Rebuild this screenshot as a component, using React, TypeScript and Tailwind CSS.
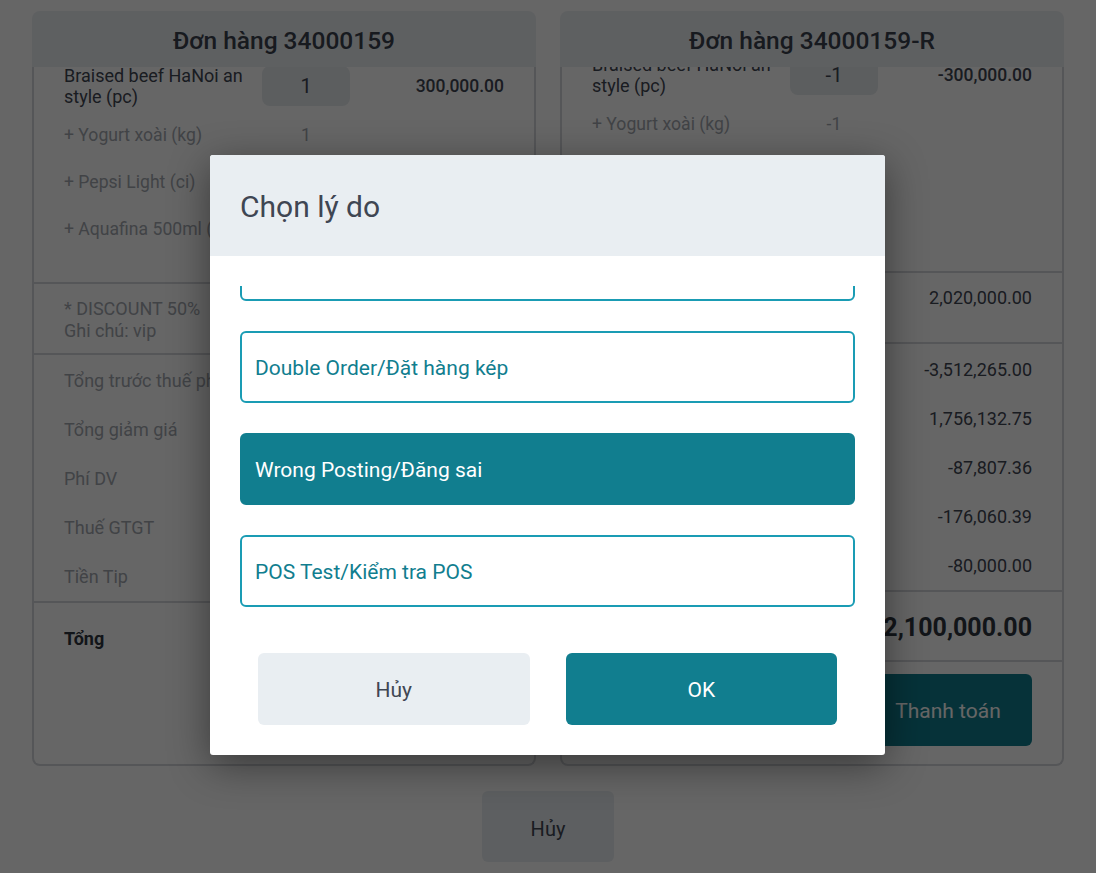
import React from "react";

const MAIN = "text-[#3f4653]";
const SUB = "text-[#a3a8b0]";

type Sub = { label: string; qty: string };
type Sum = { label: string; value: string };

function OrderCard(props: {
  title: string;
  listH: string;
  listOffset: string;
  mainQty: string;
  mainValue: string;
  subs: Sub[];
  discountValue: string;
  sums: Sum[];
  total: string;
  withPay: boolean;
}) {
  return (
    <div className="w-[504px] h-[755px] flex flex-col">
      <div className="h-[56px] shrink-0 pt-[4px] rounded-t-[8px] bg-[#eceff3] flex items-center justify-center text-[24.5px] font-medium text-[#3b424e]">
        {props.title}
      </div>
      <div className="flex-1 flex flex-col border-2 border-t-0 border-[#d4d7db] rounded-b-[8px]">
        <div className={`${props.listH} overflow-hidden shrink-0`}>
          <div className={`${props.listOffset} px-[30px]`}>
            <div className="h-[50px] flex items-center">
              <div className={`w-[198px] text-[18px] leading-[21px] ${MAIN}`}>
                Braised beef HaNoi an style (pc)
              </div>
              <div className={`w-[88px] h-[40px] rounded-[8px] bg-[#e6eaee] flex items-center justify-center text-[20px] ${MAIN}`}>
                {props.mainQty}
              </div>
              <div className={`flex-1 text-right text-[17.5px] font-medium ${MAIN}`}>
                {props.mainValue}
              </div>
            </div>
            {props.subs.map((s) => (
              <div key={s.label} className="h-[47px] pt-[2px] flex items-center">
                <div className={`w-[198px] whitespace-nowrap text-[17.6px] ${SUB}`}>{s.label}</div>
                <div className={`w-[88px] text-center text-[17.6px] ${SUB}`}>{s.qty}</div>
                <div className="flex-1" />
              </div>
            ))}
          </div>
        </div>
        <div className="h-[2px] bg-[#d4d7db] shrink-0" />
        <div className="h-[69px] shrink-0 pt-[14px] px-[30px] flex justify-between leading-[22px] text-[18px]">
          <div className={SUB}>
            <div>* DISCOUNT 50%</div>
            <div>Ghi chú: vip</div>
          </div>
          <div className={MAIN}>{props.discountValue}</div>
        </div>
        <div className="h-[2px] bg-[#d4d7db] shrink-0" />
        <div className="h-[246px] shrink-0 pt-[1px] px-[30px] flex flex-col">
          {props.sums.map((s) => (
            <div key={s.label} className="h-[49px] shrink-0 flex items-center justify-between text-[18px]">
              <span className={SUB}>{s.label}</span>
              <span className={MAIN}>{s.value}</span>
            </div>
          ))}
        </div>
        <div className="h-[2px] bg-[#d4d7db] shrink-0" />
        <div className="h-[68px] shrink-0 pt-[3px] px-[30px] flex items-center justify-between">
          <span className="text-[18px] font-bold text-[#2f3540]">Tổng</span>
          <span className="text-[25px] font-bold text-[#2f3540]">{props.total}</span>
        </div>
        {props.withPay && (
          <>
            <div className="h-[2px] bg-[#d4d7db] shrink-0" />
            <div className="pt-[12px] px-[30px] flex justify-end">
              <button className="w-[168px] h-[72px] pt-[4px] rounded-[6px] bg-[#117e8f] text-white text-[21px]">
                Thanh toán
              </button>
            </div>
          </>
        )}
      </div>
    </div>
  );
}

const reasons = [
  { label: "Customer Cancel/Khách hủy", selected: false },
  { label: "Double Order/Đặt hàng kép", selected: false },
  { label: "Wrong Posting/Đăng sai", selected: true },
  { label: "POS Test/Kiểm tra POS", selected: false },
  { label: "Other/Khác", selected: false },
];

export default function App() {
  return (
    <div className="relative w-[1096px] h-[873px] overflow-hidden bg-white font-['Roboto',sans-serif]">
      <div className="flex gap-[24px] px-[32px] pt-[11px]">
        <OrderCard
          title="Đơn hàng 34000159"
          listH="h-[215px]"
          listOffset="-mt-[6px]"
          mainQty="1"
          mainValue="300,000.00"
          subs={[
            { label: "+ Yogurt xoài (kg)", qty: "1" },
            { label: "+ Pepsi Light (ci)", qty: "1" },
            { label: "+ Aquafina 500ml (chai)", qty: "1" },
          ]}
          discountValue="-2,020,000.00"
          sums={[
            { label: "Tổng trước thuế phí", value: "3,512,265.00" },
            { label: "Tổng giảm giá", value: "-1,756,132.75" },
            { label: "Phí DV", value: "87,807.36" },
            { label: "Thuế GTGT", value: "176,060.39" },
            { label: "Tiền Tip", value: "80,000.00" },
          ]}
          total="2,100,000.00"
          withPay={false}
        />
        <OrderCard
          title="Đơn hàng 34000159-R"
          listH="h-[204px]"
          listOffset="-mt-[17px]"
          mainQty="-1"
          mainValue="-300,000.00"
          subs={[
            { label: "+ Yogurt xoài (kg)", qty: "-1" },
            { label: "+ Pepsi Light (ci)", qty: "-1" },
            { label: "+ Aquafina 500ml (chai)", qty: "-1" },
          ]}
          discountValue="2,020,000.00"
          sums={[
            { label: "Tổng trước thuế phí", value: "-3,512,265.00" },
            { label: "Tổng giảm giá", value: "1,756,132.75" },
            { label: "Phí DV", value: "-87,807.36" },
            { label: "Thuế GTGT", value: "-176,060.39" },
            { label: "Tiền Tip", value: "-80,000.00" },
          ]}
          total="-2,100,000.00"
          withPay={true}
        />
      </div>
      <div className="flex justify-center mt-[25px]">
        <button className={`w-[132px] h-[71px] pt-[4px] rounded-[6px] bg-[#e9eef2] text-[20px] ${MAIN}`}>Hủy</button>
      </div>

      <div className="absolute inset-0 bg-black/60 flex justify-start items-start pl-[210px] pt-[155px]">
        <div className="w-[675px] h-[600px] bg-white rounded-[3px] overflow-hidden flex flex-col shadow-[0_10px_40px_rgba(0,0,0,0.45)]">
          <div className="h-[101px] shrink-0 pt-[2px] bg-[#e9eef2] flex items-center px-[30px] text-[30px] text-[#3f4653]">
            Chọn lý do
          </div>
          <div className="mt-[30px] mx-[30px] h-[337px] shrink-0 overflow-hidden">
            <div className="-mt-[57px] flex flex-col gap-[30px]">
              {reasons.map((r) => (
                <div
                  key={r.label}
                  className={
                    r.selected
                      ? "h-[72px] shrink-0 pt-[4px] rounded-[6px] border-2 border-[#117e8f] bg-[#117e8f] pl-[13px] flex items-center text-[21px] text-white"
                      : "h-[72px] shrink-0 pt-[4px] rounded-[6px] border-2 border-[#1a9cb4] bg-white pl-[13px] flex items-center text-[21px] text-[#117e8f]"
                  }
                >
                  {r.label}
                </div>
              ))}
            </div>
          </div>
          <div className="mt-[30px] px-[48px] flex gap-[36px]">
            <button className={`flex-1 h-[72px] pt-[4px] rounded-[6px] bg-[#e9eef2] text-[21px] ${MAIN}`}>Hủy</button>
            <button className="flex-1 h-[72px] pt-[4px] rounded-[6px] bg-[#117e8f] text-[21px] text-white">OK</button>
          </div>
        </div>
      </div>
    </div>
  );
}
